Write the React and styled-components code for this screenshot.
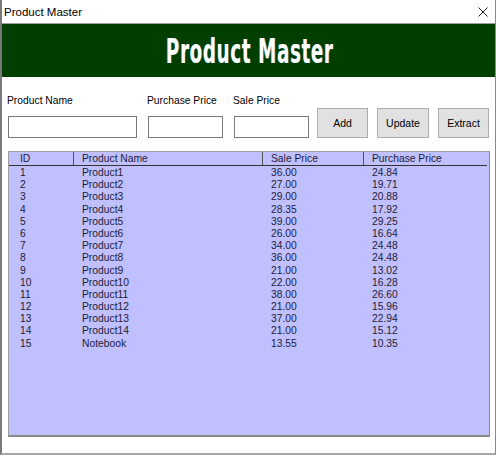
import React from 'react'
import styled, { createGlobalStyle } from 'styled-components'

const products = [
  [1, 'Product1', '36.00', '24.84'],
  [2, 'Product2', '27.00', '19.71'],
  [3, 'Product3', '29.00', '20.88'],
  [4, 'Product4', '28.35', '17.92'],
  [5, 'Product5', '39.00', '29.25'],
  [6, 'Product6', '26.00', '16.64'],
  [7, 'Product7', '34.00', '24.48'],
  [8, 'Product8', '36.00', '24.48'],
  [9, 'Product9', '21.00', '13.02'],
  [10, 'Product10', '22.00', '16.28'],
  [11, 'Product11', '38.00', '26.60'],
  [12, 'Product12', '21.00', '15.96'],
  [13, 'Product13', '37.00', '22.94'],
  [14, 'Product14', '21.00', '15.12'],
  [15, 'Notebook', '13.55', '10.35'],
]

const columns = '65px 189px 101px 124px'

const App = () => {
  return <>
    <GlobalStyle />
    <Window>
      <TitleBar>
        <Title>Product Master</Title>
        <CloseBtn>
          <svg width="10" height="10" viewBox="0 0 10 10">
            <path d="M0.5 0.5 L9.5 9.5 M9.5 0.5 L0.5 9.5" stroke="#222" strokeWidth="1" fill="none" />
          </svg>
        </CloseBtn>
      </TitleBar>
      <Body>
        <Banner><BannerText>Product Master</BannerText></Banner>
        <FormRow>
          <Field $w={129}>
            <Label>Product Name</Label>
            <Input />
          </Field>
          <Field $w={75}>
            <Label>Purchase Price</Label>
            <Input />
          </Field>
          <Field $w={75}>
            <Label>Sale Price</Label>
            <Input />
          </Field>
          <Buttons>
            <Button $w={51}>Add</Button>
            <Button $w={52}>Update</Button>
            <Button $w={51}>Extract</Button>
          </Buttons>
        </FormRow>
        <ListView>
          <Header>
            <HeadCell $pad={11}>ID</HeadCell>
            <HeadCell>Product Name</HeadCell>
            <HeadCell>Sale Price</HeadCell>
            <HeadCell $last>Purchase Price</HeadCell>
          </Header>
          <Rows>
            {products.map(p => (
              <Row key={p[0]}>
                <Cell $pad={11}>{p[0]}</Cell>
                <Cell>{p[1]}</Cell>
                <Cell>{p[2]}</Cell>
                <Cell>{p[3]}</Cell>
              </Row>
            ))}
          </Rows>
        </ListView>
      </Body>
    </Window>
  </>
}

const GlobalStyle = createGlobalStyle`
  body {
    margin: 0;
    background: #ffffff;
    font-family: "Liberation Sans", Arial, sans-serif;
  }
`

const Window = styled.div`
  width: 496px;
  height: 455px;
  box-sizing: border-box;
  border-left: 2px solid #7a7a7a;
  border-right: 1px solid #8a8a8a;
  border-bottom: 2px solid #a8a8a8;
  display: flex;
  flex-direction: column;
  background: #fff;
`

const TitleBar = styled.div`
  height: 23px;
  display: flex;
  align-items: center;
  justify-content: space-between;
  padding-left: 2px;
  background: #fff;
`

const Title = styled.span`
  font-size: 11.5px;
  color: #000;
`

const CloseBtn = styled.div`
  width: 30px;
  display: flex;
  justify-content: center;
  align-items: center;
  margin-right: -3px;
  margin-top: 1px;
`

const Body = styled.div`
  flex: 1;
  border-top: 1px solid #a0a0a0;
  display: flex;
  flex-direction: column;
`

const Banner = styled.div`
  height: 53px;
  background: #003f00;
  display: flex;
  align-items: center;
  justify-content: center;
`

const BannerText = styled.div`
  font-family: "DejaVu Sans Condensed", "DejaVu Sans", sans-serif;
  font-weight: bold;
  font-size: 34px;
  color: #fff;
  transform: scaleX(0.6);
  letter-spacing: 1px;
  text-shadow: 1px 0 0 rgba(120, 160, 255, 0.5);
  margin-left: 2px;
`

const FormRow = styled.div`
  display: flex;
  align-items: flex-end;
  padding: 17px 0 0 6px;
  gap: 11px;
`

const Field = styled.div`
  width: ${p => p.$w}px;
  display: flex;
  flex-direction: column;
  gap: 9px;
`

const Label = styled.label`
  font-size: 10.3px;
  line-height: 13px;
  color: #000;
  margin-left: -1px;
`

const Input = styled.input`
  height: 22px;
  box-sizing: border-box;
  border: 1px solid #7a7a7a;
  background: #fff;
  margin: 0;
`

const Buttons = styled.div`
  display: flex;
  gap: 9px;
  margin-left: -3px;
`

const Button = styled.button`
  width: ${p => p.$w}px;
  height: 30px;
  box-sizing: border-box;
  background: #e1e1e1;
  border: 1px solid #adadad;
  font-family: "Liberation Sans", Arial, sans-serif;
  font-size: 10.5px;
  color: #000;
  padding: 0;
`

const ListView = styled.div`
  margin: 13px 0 0 6px;
  width: 482px;
  height: 286px;
  box-sizing: border-box;
  border: 1px solid #a0a0a0;
  border-right-color: #8a8a8a;
  border-bottom: 2px solid #8a8a8a;
  background: #c0c0ff;
  font-size: 10.3px;
  color: #1c1c38;
`

const Header = styled.div`
  display: grid;
  grid-template-columns: ${columns};
  height: 13px;
  border-bottom: 1px solid #333;
  margin-right: 2px;
`

const HeadCell = styled.div`
  padding-left: ${p => p.$pad || 8}px;
  line-height: 13px;
  border-right: ${p => p.$last ? 'none' : '1px solid #555'};
`

const Rows = styled.div`
  padding-top: 1px;
`

const Row = styled.div`
  display: grid;
  grid-template-columns: ${columns};
  height: 12.2px;
  line-height: 12.2px;
`

const Cell = styled.div`
  padding-left: ${p => p.$pad || 8}px;
`

export default App
